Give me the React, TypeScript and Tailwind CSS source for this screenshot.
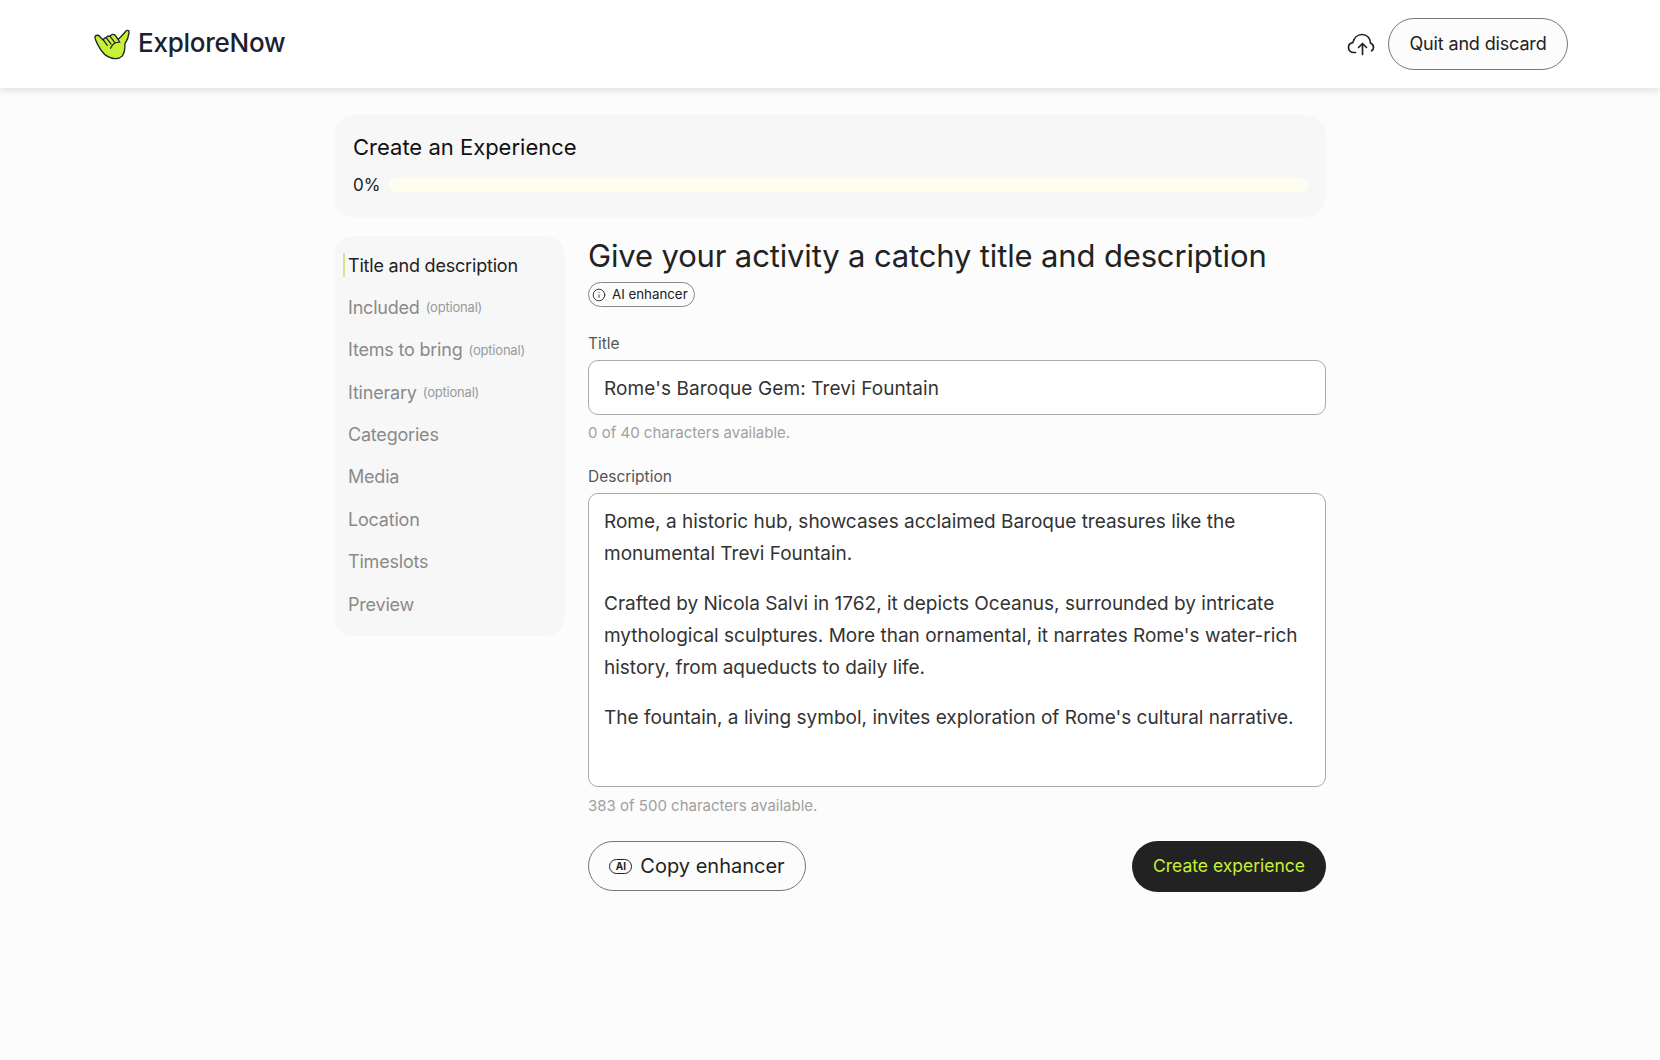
import { Info } from "lucide-react";

const steps = [
  { label: "Included", optional: true },
  { label: "Items to bring", optional: true },
  { label: "Itinerary", optional: true },
  { label: "Categories" },
  { label: "Media" },
  { label: "Location" },
  { label: "Timeslots" },
  { label: "Preview" },
];

function Logo() {
  return (
    <svg width="36" height="31" viewBox="0 0 38 32" className="shrink-0">
      <path
        d="M1 7.5C3 5.5 5 6 6.5 8L10 11.5C10 9.5 11.500 8.500 13 9C13.500 7 15.500 6.500 17 7.500C18 5 21 4.500 22.500 6.500L25.500 10.500C28.500 8 31 5 34 1.500C36 0.500 37.200 1.500 37 3.500C36.500 8 35 12 32.500 15.500C33 20 32 25 30 28C27 31 23 31.500 19 30.500C13 29 8 24 5 18C3 14.500 1 11 1 7.5Z"
        fill="#c6f135"
        stroke="#1f2430"
        strokeWidth="1.4"
        strokeLinejoin="round"
      />
      <path
        d="M10 11.500L14 17M13 9L18 15.500M17 7.500L22 14M25.500 10.500L27 13.500C23 13 19 16 17.500 20"
        fill="none"
        stroke="#1f2430"
        strokeWidth="1.3"
        strokeLinecap="round"
      />
    </svg>
  );
}

function CloudUpload() {
  return (
    <svg width="28" height="24" viewBox="0 0 28 24" fill="none" stroke="#222" strokeWidth="1.7" strokeLinecap="round" strokeLinejoin="round">
      <path d="M8.500 20.500H7C3.800 20.500 1.500 18.300 1.500 15.500C1.500 13 3.300 11 5.800 10.600C7 6 10.500 2.500 15 2.500C20 2.500 23.500 6.300 23.500 11C25.500 12 26.500 13.500 26.500 15.200C26.500 16.800 25.800 18 24.600 18.800" />
      <path d="M15.500 22.500V11.500M11.500 15.500L15.500 11.500L19.500 15.500" />
    </svg>
  );
}

function AiBadge() {
  return (
    <span className="flex h-[15px] w-[23px] items-center justify-center rounded-full border-[1.5px] border-[#222] text-[10px] font-bold leading-none text-[#222]">
      AI
    </span>
  );
}

export default function App() {
  return (
    <div className="min-h-[1060px] bg-[#fcfcfc] font-['Inter',sans-serif] text-[#222]">
      <header className="flex h-[88px] items-center justify-between bg-white pl-[94px] pr-[92px] shadow-[0_2px_8px_rgba(0,0,0,0.12)]">
        <div className="flex items-center gap-[8px]">
          <Logo />
          <span className="pb-[3px] text-[26px] font-medium tracking-[-0.26px] text-[#1b2130]">ExploreNow</span>
        </div>
        <div className="flex items-center gap-[13px]">
          <CloudUpload />
          <button className="h-[52px] w-[180px] rounded-full border border-[#777] bg-[#fcfcfc] pb-[1px] text-[18px] tracking-[-0.15px] text-[#222]">
            Quit and discard
          </button>
        </div>
      </header>

      <main className="mx-auto w-[992px] pt-[27px]">
        <section className="h-[102px] rounded-[20px] bg-[#f7f7f7] px-[18px] pt-[16px]">
          <h1 className="pl-[1px] text-[22px] leading-[32px] text-[#111]">Create an Experience</h1>
          <div className="mt-[10px] flex items-center gap-[9px] pl-[1px]">
            <span className="text-[17px] leading-[24px] text-[#222]">0%</span>
            <div className="h-[14px] flex-1 rounded-full bg-[#fdfeef]" />
          </div>
        </section>

        <div className="mt-[19px] flex gap-[23px]">
          <nav className="h-[400px] w-[231px] shrink-0 rounded-[20px] bg-[#f7f7f7] pl-[9px] pt-[17px]">
            <div className="flex h-[24px] items-center border-l-2 border-[#d3e58b] pl-[3px] text-[18px] tracking-[-0.2px] text-[#222]">
              Title and description
            </div>
            {steps.map((s) => (
              <div key={s.label} className="mt-[18.400px] flex h-[24px] items-center gap-[6px] pl-[5px] text-[18px] tracking-[-0.2px] text-[#8a8a8a]">
                {s.label}
                {s.optional && <span className="pt-[1px] text-[13px] text-[#9a9a9a]">(optional)</span>}
              </div>
            ))}
          </nav>

          <div className="flex-1">
            <h2 className="-mt-[1px] whitespace-nowrap text-[31px] leading-[41px] tracking-[-0.15px] text-[#222]">Give your activity a catchy title and description</h2>
            <div className="mt-[6px] flex h-[25px] w-[107px] items-center gap-[6px] whitespace-nowrap rounded-full border border-[#888] pl-[3px] text-[13.300px] text-[#222]">
              <Info size={14} strokeWidth={1.5} />
              AI enhancer
            </div>

            <label className="mt-[26px] block text-[15.500px] leading-[22px] text-[#555]">Title</label>
            <div className="mt-[5px] flex h-[55px] items-center rounded-[10px] border border-[#aaa] bg-white px-[15px] pt-[4px] text-[19px] tracking-[0.1px] text-[#333]">
              Rome's Baroque Gem: Trevi Fountain
            </div>
            <p className="mt-[7px] text-[15px] leading-[22px] text-[#a0a0a0]">0 of 40 characters available.</p>

            <label className="mt-[22px] block text-[15.500px] leading-[22px] text-[#555]">Description</label>
            <div className="mt-[5px] h-[294px] rounded-[10px] border border-[#aaa] bg-white px-[15px] pt-[12px] text-[19px] leading-[32px] text-[#333]">
              <p>Rome, a historic hub, showcases acclaimed Baroque treasures like the monumental Trevi Fountain.</p>
              <p className="mt-[18px]">
                Crafted by Nicola Salvi in 1762, it depicts Oceanus, surrounded by intricate mythological sculptures. More than ornamental, it narrates Rome's water-rich history, from aqueducts to daily life.
              </p>
              <p className="mt-[18px]">The fountain, a living symbol, invites exploration of Rome's cultural narrative.</p>
            </div>
            <p className="mt-[8px] text-[15px] leading-[22px] text-[#a0a0a0]">383 of 500 characters available.</p>

            <div className="mt-[24px] flex items-start justify-between">
              <button className="flex h-[50px] w-[218px] items-center justify-center gap-[8px] rounded-full border border-[#777] bg-[#fcfcfc] text-[20px] text-[#222]">
                <AiBadge />
                Copy enhancer
              </button>
              <button className="h-[51px] w-[194px] rounded-full bg-[#222] text-[17.500px] text-[#c6f135]">
                Create experience
              </button>
            </div>
          </div>
        </div>
      </main>
    </div>
  );
}
